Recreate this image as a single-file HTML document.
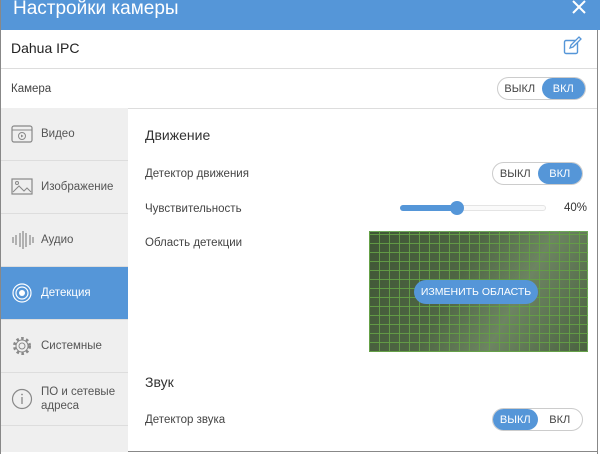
<!DOCTYPE html>
<html><head><meta charset="utf-8"><style>
*{margin:0;padding:0;box-sizing:border-box}
body{width:600px;height:454px;background:#fff;font-family:"Liberation Sans",sans-serif;color:#333;position:relative;overflow:hidden}
.abs{position:absolute}
.hdr{left:0;top:0;width:600px;height:30px;background:#5596d8;color:#fff;font-size:19px;padding:0 0 0 13px;line-height:17px}
.line{background:#ddd;height:1px}
.tog{border:1px solid #ccc;border-radius:12px;height:23px;font-size:11px;display:flex;background:#fff}
.tog span{flex:1;text-align:center;line-height:22px;border-radius:11px;color:#444}
.tog span.on{background:#5596d8;color:#fff}
.side{left:1px;top:108px;width:127px;height:344px;background:#efefef}
.it{position:absolute;left:0;width:127px;height:53px;border-bottom:1px solid #ddd;font-size:11.5px;color:#555;display:flex;align-items:center;padding-left:40px}
.it svg{position:absolute;left:10px;top:50%;transform:translateY(-50%)}
.act{background:#5596d8;color:#fff}
.lbl{font-size:11.5px;color:#444}
</style></head><body>
<div class="abs hdr">Настройки камеры</div>
<svg class="abs" style="left:571px;top:0" width="16" height="14"><path d="M2 1L14 13M14 1L2 13" stroke="#fff" stroke-width="2"/></svg>
<div class="abs" style="left:11px;top:40px;font-size:14px;color:#222">Dahua IPC</div>
<svg class="abs" style="left:563px;top:36px" width="20" height="20"><rect x="1.5" y="4.5" width="13" height="13" rx="1.5" fill="none" stroke="#5596d8" stroke-width="1.4"/><path d="M7 12l1-3 8-8 2 2-8 8z" fill="#fff" stroke="#5596d8" stroke-width="1.3"/></svg>
<div class="abs line" style="left:0;top:68px;width:598px"></div>
<div class="abs lbl" style="left:11px;top:83px">Камера</div>
<div class="abs tog" style="left:497px;top:77px;width:89px"><span>ВЫКЛ</span><span class="on">ВКЛ</span></div>
<div class="abs line" style="left:0;top:108px;width:598px"></div>
<div class="abs" style="left:0;top:0;width:1px;height:454px;background:#888"></div>
<div class="abs" style="left:597px;top:30px;width:1px;height:424px;background:#888"></div>
<div class="abs" style="left:0;top:451px;width:598px;height:1px;background:#888"></div>
<div class="abs side">
<div class="it" style="top:0"><svg width="22" height="20"><rect x="1" y="2" width="20" height="16" rx="2" fill="none" stroke="#888" stroke-width="1.2"/><path d="M1 6h20" stroke="#888"/><circle cx="11" cy="12" r="3.5" fill="none" stroke="#888"/><path d="M10 10.5l2.5 1.5-2.5 1.5z" fill="#888"/></svg>Видео</div>
<div class="it" style="top:53px"><svg width="22" height="20"><rect x="1" y="2" width="20" height="15" fill="none" stroke="#888" stroke-width="1.2"/><path d="M2 15l6-6 5 5 3-3 4 4" fill="none" stroke="#888"/><circle cx="6" cy="6" r="1.5" fill="none" stroke="#888"/></svg>Изображение</div>
<div class="it" style="top:106px"><svg width="24" height="20"><path d="M2 7v6M5 5v10M9 3v14M12 1v18M15 3v14M19 5v10M22 7v6" stroke="#888" stroke-width="1.2"/></svg>Аудио</div>
<div class="it act" style="top:159px"><svg width="22" height="22"><circle cx="11" cy="11" r="9" fill="none" stroke="#fff" stroke-width="1.2"/><circle cx="11" cy="11" r="6" fill="none" stroke="#fff" stroke-width="1.2"/><circle cx="11" cy="11" r="3" fill="#fff"/></svg>Детекция</div>
<div class="it" style="top:212px"><svg width="22" height="22"><circle cx="11" cy="11" r="7.5" fill="none" stroke="#888" stroke-width="3" stroke-dasharray="2.5 2.4"/><circle cx="11" cy="11" r="6" fill="none" stroke="#888"/><circle cx="11" cy="11" r="3" fill="none" stroke="#888"/></svg>Системные</div>
<div class="it" style="top:265px;line-height:14px"><svg width="22" height="22"><circle cx="11" cy="11" r="9.5" fill="none" stroke="#888" stroke-width="1.2"/><path d="M11 9v7" stroke="#888" stroke-width="1.3"/><circle cx="11" cy="6.5" r="0.9" fill="#888"/></svg>ПО и сетевые<br>адреса</div>
</div>
<div class="abs" style="left:145px;top:127px;font-size:14px;color:#333">Движение</div>
<div class="abs lbl" style="left:145px;top:168px">Детектор движения</div>
<div class="abs tog" style="left:492px;top:162px;width:91px"><span>ВЫКЛ</span><span class="on">ВКЛ</span></div>
<div class="abs lbl" style="left:145px;top:203px">Чувствительность</div>
<div class="abs" style="left:400px;top:205px;width:146px;height:6px;border:1px solid #e4e4e4;border-radius:3px;background:#fafafa"></div>
<div class="abs" style="left:400px;top:205px;width:58px;height:6px;border-radius:3px;background:#5596d8"></div>
<div class="abs" style="left:450px;top:201px;width:14px;height:14px;border-radius:7px;background:#5596d8"></div>
<div class="abs lbl" style="left:564px;top:202px;color:#333">40%</div>
<div class="abs lbl" style="left:145px;top:237px">Область детекции</div>
<div class="abs" style="left:369px;top:231px;width:219px;height:121px;background:linear-gradient(120deg,#3f5535 0%,#4f6644 40%,#6d8462 65%,#4a6140 100%);border:1px solid #6ea85a"></div>
<div class="abs" style="left:369px;top:231px;width:219px;height:121px;background:repeating-linear-gradient(90deg,rgba(100,160,70,.9) 0 1px,transparent 1px 10px),repeating-linear-gradient(0deg,rgba(100,160,70,.9) 0 1px,transparent 1px 9px)"></div>
<div class="abs" style="left:414px;top:280px;width:124px;height:24px;border-radius:12px;background:#5596d8;color:#fff;font-size:10.5px;text-align:center;line-height:24px">ИЗМЕНИТЬ ОБЛАСТЬ</div>
<div class="abs" style="left:145px;top:374px;font-size:14px;color:#333">Звук</div>
<div class="abs lbl" style="left:145px;top:414px">Детектор звука</div>
<div class="abs tog" style="left:492px;top:408px;width:91px"><span class="on">ВЫКЛ</span><span>ВКЛ</span></div>
</body></html>
